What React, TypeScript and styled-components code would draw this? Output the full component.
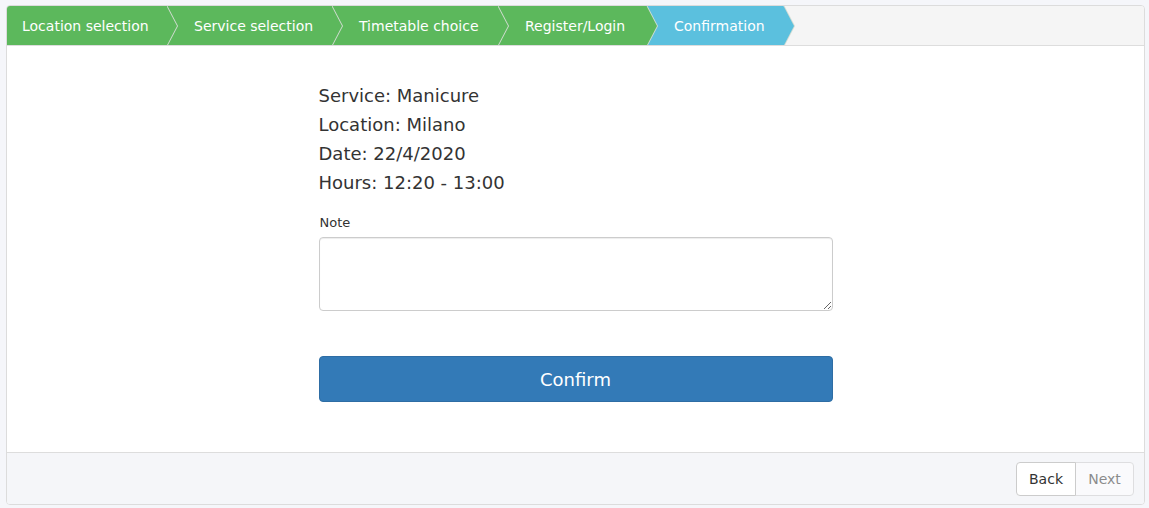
import React from "react";
import styled, { createGlobalStyle } from "styled-components";

const Global = createGlobalStyle`
  html, body { margin: 0; padding: 0; }
  body {
    background: #f5f6fa;
    font-family: Verdana, "DejaVu Sans", sans-serif;
    color: #333;
  }
  * { box-sizing: border-box; }
`;

const Page = styled.div`
  padding: 5px 4px 3px 6px;
`;

const Card = styled.div`
  border: 1px solid #dcdcdc;
  border-radius: 4px;
  background: #fff;
  overflow: hidden;
  display: flex;
  flex-direction: column;
`;

const Nav = styled.div`
  display: flex;
  height: 40px;
  background: #f5f5f5;
  border-bottom: 1px solid #ddd;
  overflow: hidden;
`;

const Step = styled.div<{ $color: string; $first?: boolean; $width: number }>`
  position: relative;
  display: flex;
  align-items: center;
  flex: 0 0 ${(p) => p.$width}px;
  height: 39px;
  padding-left: ${(p) => (p.$first ? "15px" : "28px")};
  background: ${(p) => p.$color};
  color: #fff;
  font-size: 14px;
  white-space: nowrap;

  &::before,
  &::after {
    content: "";
    position: absolute;
    top: 50%;
    left: 100%;
    width: 0;
    height: 0;
    margin-top: -21px;
    border-top: 21px solid transparent;
    border-bottom: 21px solid transparent;
  }
  &::after {
    border-left: 11px solid ${(p) => p.$color};
    z-index: 2;
  }
  &::before {
    border-left: 11px solid #d3dcd3;
    margin-left: 1px;
    z-index: 1;
  }
`;

const Content = styled.div`
  padding: 35px 0 50px;
  display: flex;
  justify-content: center;
`;

const Column = styled.div`
  width: 514px;
  display: flex;
  flex-direction: column;
`;

const InfoLine = styled.div`
  font-size: 18px;
  line-height: 29px;
  color: #333;
`;

const Label = styled.label`
  margin-top: 17px;
  padding-left: 1px;
  font-size: 13px;
  line-height: 18px;
  color: #333;
`;

const NoteArea = styled.textarea`
  margin-top: 5px;
  width: 514px;
  height: 74px;
  border: 1px solid #ccc;
  border-radius: 4px;
  font-family: inherit;
  font-size: 14px;
  padding: 6px 12px;
  box-shadow: inset 0 1px 1px rgba(0, 0, 0, 0.075);
  resize: vertical;
`;

const ConfirmButton = styled.button`
  margin-top: 45px;
  height: 46px;
  width: 100%;
  background: #337ab7;
  border: 1px solid #2e6da4;
  border-radius: 4px;
  color: #fff;
  font-family: inherit;
  font-size: 18px;
  cursor: pointer;
`;

const Footer = styled.div`
  border-top: 1px solid #ddd;
  background: #f5f6f9;
  height: 52px;
  padding: 9px 10px 0 0;
  display: flex;
  justify-content: flex-end;
  align-items: flex-start;
`;

const BtnGroup = styled.div`
  display: flex;
`;

const NavButton = styled.button<{ $disabled?: boolean; $pos: "left" | "right" }>`
  height: 34px;
  width: ${(p) => (p.$pos === "left" ? "60px" : "59px")};
  padding: 0;
  background: #fff;
  border: 1px solid #ccc;
  font-family: inherit;
  font-size: 14px;
  color: #333;
  opacity: ${(p) => (p.$disabled ? 0.55 : 1)};
  border-radius: ${(p) => (p.$pos === "left" ? "4px 0 0 4px" : "0 4px 4px 0")};
  margin-left: ${(p) => (p.$pos === "right" ? "-1px" : "0")};
`;

const steps = [
  { label: "Location selection", color: "#5cb85c", width: 159 },
  { label: "Service selection", color: "#5cb85c", width: 165 },
  { label: "Timetable choice", color: "#5cb85c", width: 166 },
  { label: "Register/Login", color: "#5cb85c", width: 149 },
  { label: "Confirmation", color: "#5bc0de", width: 137 },
];

export default function App() {
  return (
    <>
      <Global />
      <Page>
        <Card>
          <Nav>
            {steps.map((s, i) => (
              <Step
                key={s.label}
                $color={s.color}
                $first={i === 0}
                $width={s.width}
                style={{ zIndex: 10 - i }}
              >
                {s.label}
              </Step>
            ))}
          </Nav>
          <Content>
            <Column>
              <InfoLine>Service: Manicure</InfoLine>
              <InfoLine>Location: Milano</InfoLine>
              <InfoLine>Date: 22/4/2020</InfoLine>
              <InfoLine>Hours: 12:20 - 13:00</InfoLine>
              <Label>Note</Label>
              <NoteArea />
              <ConfirmButton>Confirm</ConfirmButton>
            </Column>
          </Content>
          <Footer>
            <BtnGroup>
              <NavButton $pos="left">Back</NavButton>
              <NavButton $pos="right" $disabled>Next</NavButton>
            </BtnGroup>
          </Footer>
        </Card>
      </Page>
    </>
  );
}
